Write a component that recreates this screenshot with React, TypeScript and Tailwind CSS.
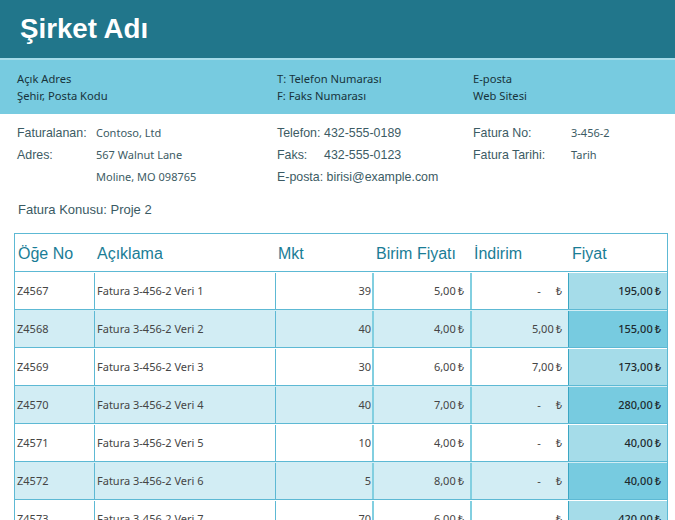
const rows = [
  ["Z4567", "Fatura 3-456-2 Veri 1", "39", "5,00", "-", "195,00"],
  ["Z4568", "Fatura 3-456-2 Veri 2", "40", "4,00", "5,00", "155,00"],
  ["Z4569", "Fatura 3-456-2 Veri 3", "30", "6,00", "7,00", "173,00"],
  ["Z4570", "Fatura 3-456-2 Veri 4", "40", "7,00", "-", "280,00"],
  ["Z4571", "Fatura 3-456-2 Veri 5", "10", "4,00", "-", "40,00"],
  ["Z4572", "Fatura 3-456-2 Veri 6", "5", "8,00", "-", "40,00"],
  ["Z4573", "Fatura 3-456-2 Veri 7", "70", "6,00", "-", "420,00"],
];
const heads = ["Öğe No", "Açıklama", "Mkt", "Birim Fiyatı", "İndirim", "Fiyat"];
const grid = "grid grid-cols-[79px_181px_97px_98px_98px_99px]";
const money = (v: string) => (
  <span className="flex items-center justify-end">
    {v === "-" ? <span className="mr-[13px]">-</span> : <span>{v}</span>}
    <span className="ml-[2px] text-[11px]">₺</span>
  </span>
);

export default function App() {
  return (
    <div className="h-[520px] w-[675px] overflow-hidden bg-white font-['Liberation_Sans',sans-serif]">
      <header className="flex h-[58px] items-center bg-[#21768b] pl-5 pb-[1px] text-[27.7px] font-bold text-white">Şirket Adı</header>
      <div className="h-[2px] bg-[#a4dbe9]" />
      <div className="grid h-[54px] grid-cols-[260px_196px_1fr] content-center bg-[#77cbe0] pl-[17px] font-['Noto_Sans',sans-serif] text-[11.2px] leading-[17px] text-[#17333b]">
        <div>Açık Adres<br />Şehir, Posta Kodu</div>
        <div>T: Telefon Numarası<br />F: Faks Numarası</div>
        <div>E-posta<br />Web Sitesi</div>
      </div>
      <div className="grid grid-cols-[260px_196px_1fr] pl-[17px] pt-[8px] text-[12.4px] leading-[22px] text-[#3c5b64]">
        <div className="grid grid-cols-[79px_1fr]">
          <span>Faturalanan:</span><span className="font-['Noto_Sans',sans-serif] text-[11px]">Contoso, Ltd</span>
          <span>Adres:</span><span className="font-['Noto_Sans',sans-serif] text-[11px]">567 Walnut Lane</span>
          <span></span><span className="font-['Noto_Sans',sans-serif] text-[11px]">Moline, MO 098765</span>
        </div>
        <div className="grid grid-cols-[47px_1fr] content-start">
          <span>Telefon:</span><span>432-555-0189</span>
          <span>Faks:</span><span>432-555-0123</span>
          <span className="col-span-2">E-posta: birisi@example.com</span>
        </div>
        <div className="grid grid-cols-[98px_1fr] content-start">
          <span>Fatura No:</span><span className="font-['Noto_Sans',sans-serif] text-[11px]">3-456-2</span>
          <span>Fatura Tarihi:</span><span className="font-['Noto_Sans',sans-serif] text-[11px]">Tarih</span>
        </div>
      </div>
      <div className="pl-[18px] pt-[12px] text-[13px] leading-[20px] text-[#3a5a63]">Fatura Konusu: Proje 2</div>
      <div className="ml-[14px] mt-[13px] w-[654px] border border-[#5db9d4]">
        <div className={`${grid} h-[37px] items-center pt-[2px] text-[16px] text-[#1a7d96]`}>
          {heads.map((h, i) => <div key={h} className={i > 2 ? "pl-[4px]" : "pl-[3px]"}>{h}</div>)}
        </div>
        {rows.map((r, i) => {
          const alt = i % 2 === 1;
          return (
            <div key={r[0]} className={`${grid} h-[38px] border-t border-[#5db9d4] pt-[1px] font-['Noto_Sans',sans-serif] text-[11px] text-[#454545] ${alt ? "bg-[#d2edf4]" : "bg-white"}`}>
              <div className="flex items-center pl-[2px]">{r[0]}</div>
              <div className="flex items-center border-l border-[#5db9d4] pl-[2px]">{r[1]}</div>
              <div className="flex items-center justify-end border-l border-[#5db9d4] pr-[1px]">{r[2]}</div>
              <div className="flex items-center justify-end border-l-2 border-[#82cfe0] pr-[6px]">{money(r[3])}</div>
              <div className="flex items-center justify-end border-l-2 border-[#82cfe0] pr-[6px]">{money(r[4])}</div>
              <div className={`flex items-center justify-end border-l border-[#3ba6c3] pr-[6px] font-medium text-[#1e2a2e] ${alt ? "bg-[#77cbe0]" : "bg-[#a5dce9]"}`}>{money(r[5])}</div>
            </div>
          );
        })}
      </div>
    </div>
  );
}
